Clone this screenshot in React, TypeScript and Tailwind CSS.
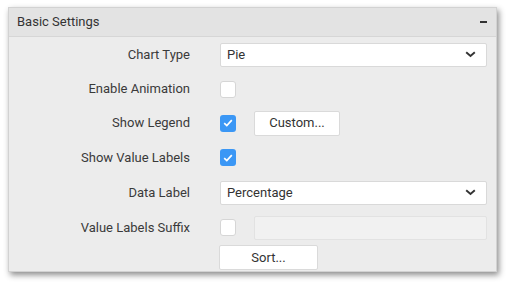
import React from 'react';

const font = { fontFamily: 'Roboto, "Noto Sans", sans-serif' };

const Chevron = () => (
  <svg width="11" height="7" viewBox="0 0 11 7" className="text-[#333]">
    <path d="M1.2 1.2l4.3 3.8 4.3-3.8" fill="none" stroke="currentColor" strokeWidth="1.9" />
  </svg>
);

const Check = ({ checked }: { checked?: boolean }) =>
  checked ? (
    <div className="w-4 h-[17px] rounded-[3px] bg-[#3b97f5] flex items-center justify-center">
      <svg width="10" height="8" viewBox="0 0 10 8">
        <path d="M1.2 4.2l2.6 2.4L8.8 1.2" fill="none" stroke="#fff" strokeWidth="1.7" />
      </svg>
    </div>
  ) : (
    <div className="w-4 h-[17px] rounded-[3px] bg-white border border-[#d6d6d6]" />
  );

const Select = ({ value }: { value: string }) => (
  <div className="flex-1 h-6 bg-white border border-[#d9d9d9] rounded-[2px] flex items-center justify-between pl-[6px] pr-[10px] text-[13px] text-[#333]">
    <span>{value}</span>
    <Chevron />
  </div>
);

const Row = ({ label, h, children }: { label: string; h: string; children: React.ReactNode }) => (
  <div className={`flex items-center ${h}`}>
    <div className="w-[181px] text-right text-[13px] text-[#3a3a3a]">{label}</div>
    <div className="flex-1 flex items-center ml-[30px]">{children}</div>
  </div>
);

export default function App() {
  return (
    <div className="w-[511px] h-[285px] bg-white pt-[7px] pl-[8px]" style={font}>
      <div className="w-[489px] h-[265px] border border-[#d2d2d2] bg-[#ececec] shadow-[2px_3px_6px_rgba(0,0,0,0.45)] flex flex-col">
        <div className="h-[29px] bg-[#e3e3e3] border-b border-[#d6d6d6] flex items-center justify-between pl-2 pr-[9px]">
          <span className="text-[13px] text-[#333]">Basic Settings</span>
          <div className="w-[7px] h-[2px] bg-[#333]" />
        </div>
        <div className="flex flex-col pr-[9px]">
          <Row label="Chart Type" h="h-[35px]">
            <Select value="Pie" />
          </Row>
          <Row label="Enable Animation" h="h-[34px]">
            <Check />
          </Row>
          <Row label="Show Legend" h="h-[34px]">
            <Check checked />
            <button className="ml-[18px] w-[86px] h-[25px] bg-white border border-[#dadada] rounded-[2px] text-[13px] text-[#333]">
              Custom...
            </button>
          </Row>
          <Row label="Show Value Labels" h="h-[35px]">
            <Check checked />
          </Row>
          <Row label="Data Label" h="h-[35px]">
            <Select value="Percentage" />
          </Row>
          <Row label="Value Labels Suffix" h="h-[35px]">
            <Check />
            <div className="ml-[18px] flex-1 h-6 bg-[#f1f1f1] border border-[#e2e2e2] rounded-[2px]" />
          </Row>
          <div className="flex ml-[210px]">
            <button className="w-[99px] h-[25px] bg-white border border-[#dadada] rounded-[2px] text-[13px] text-[#333]">
              Sort...
            </button>
          </div>
        </div>
      </div>
    </div>
  );
}
